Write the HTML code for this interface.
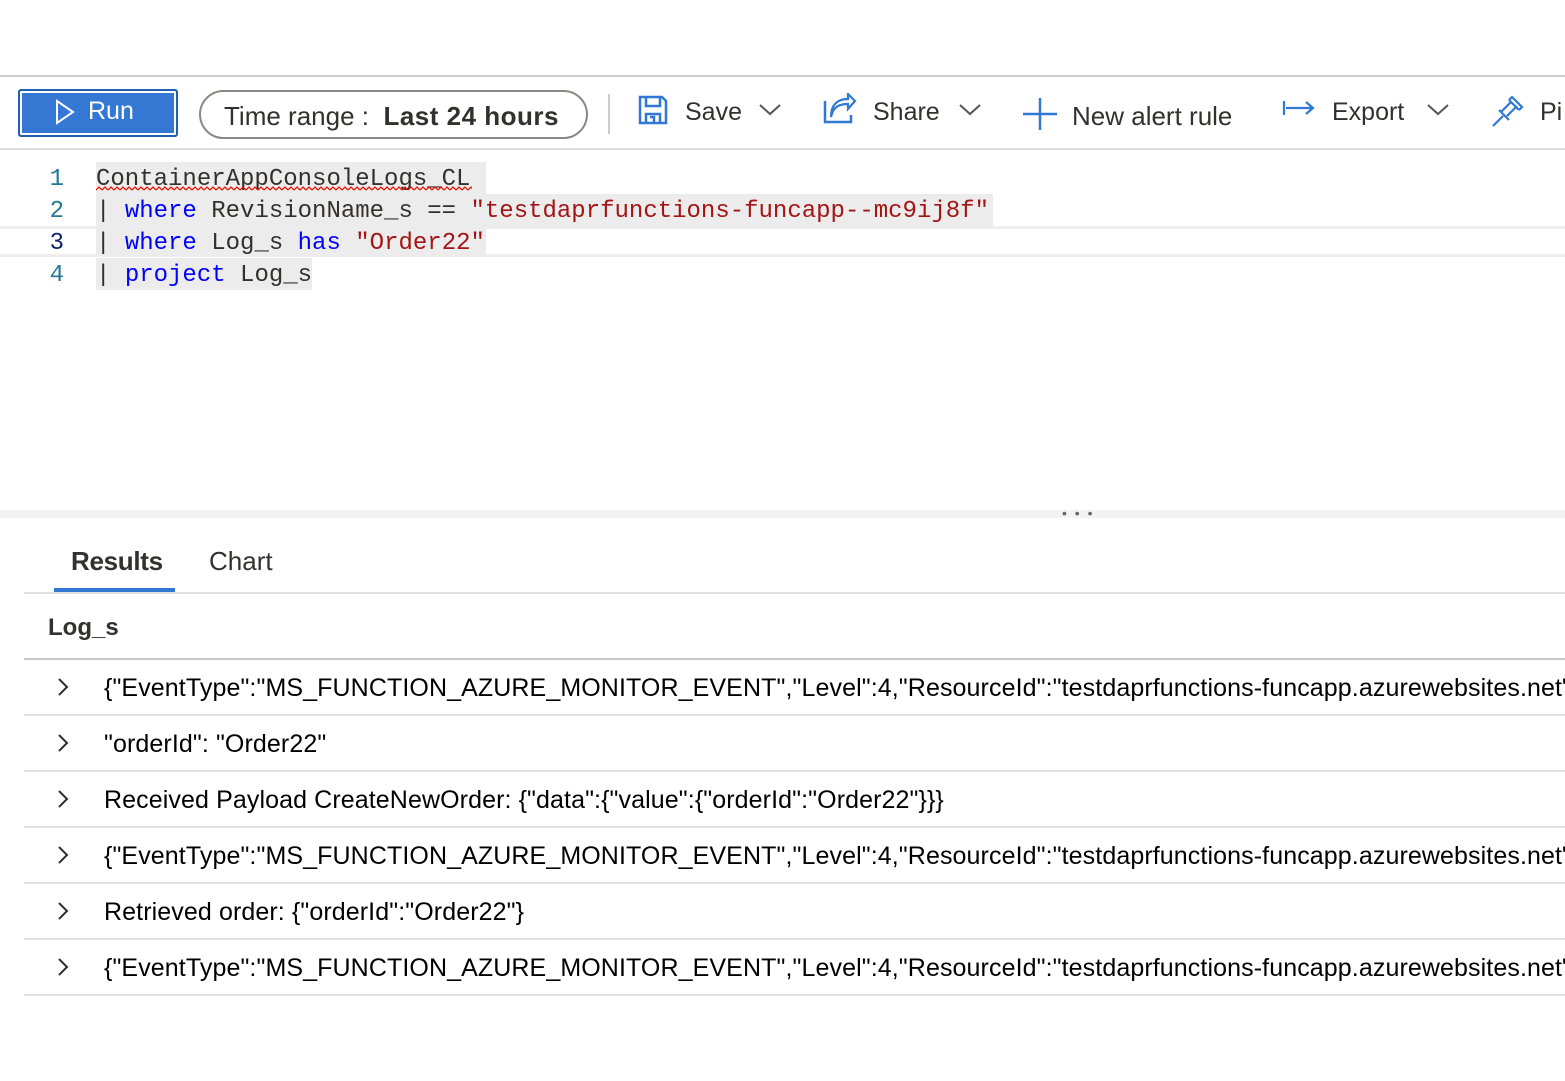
<!DOCTYPE html>
<html><head><meta charset="utf-8"><style>
*{margin:0;padding:0;box-sizing:border-box}
body{width:1565px;height:1081px;background:#fff;position:relative;overflow:hidden;font-family:"Liberation Sans",sans-serif;color:#323130}
.abs{position:absolute}
.tb{font-size:25px;color:#323130;white-space:nowrap}
.mono{font-family:"Liberation Mono",monospace;font-size:24px;white-space:pre}
.kw{color:#0000ff}.st{color:#a31515}
.ln{position:absolute;left:0;width:64px;text-align:right;font-family:"Liberation Mono",monospace;font-size:24px;color:#237893}
.row{position:absolute;left:24px;right:0;height:56px;border-bottom:2px solid #e1e1e1}
.row .chev{position:absolute;left:32px;top:16px}
.row .t{position:absolute;left:80px;top:14px;font-size:25px;color:#000;white-space:nowrap;letter-spacing:0.1px}
</style></head><body>
<div class="abs" style="left:0;top:75px;width:1565px;height:2px;background:#ccc"></div>
<div class="abs" style="left:0;top:148px;width:1565px;height:2px;background:#ddd"></div>

<div class="abs" style="left:18px;top:89px;width:160px;height:48px;background:#3478d4;border:2px solid #1f5fb4;border-radius:3px;box-shadow:inset 0 0 0 2px #fff"></div>
<svg class="abs" style="left:54px;top:99px" width="22" height="26"><path d="M3 2 L19 13 L3 24 Z" fill="none" stroke="#fff" stroke-width="2"/></svg>
<div class="abs tb" style="left:88px;top:97px;color:#fff">Run</div>

<div class="abs" style="left:199px;top:90px;width:389px;height:49px;border:2px solid #8a8886;border-radius:25px"></div>
<div class="abs tb" style="left:224px;top:101px;font-size:26px">Time range :&nbsp; <b style="font-weight:bold;letter-spacing:0.5px">Last 24 hours</b></div>
<div class="abs" style="left:608px;top:94px;width:2px;height:40px;background:#ccc"></div>

<svg class="abs" style="left:638px;top:95px" width="30" height="30"><path d="M2 2 H24 L28 6 V28 H2 Z M8 2 V11 H22 V2 M8 28 V19 H22 V28 M12 22 H16 V28" fill="none" stroke="#3178d2" stroke-width="2.5"/></svg>
<div class="abs tb" style="left:685px;top:98px">Save</div>
<svg class="abs" style="left:758px;top:103px" width="24" height="14"><path d="M2 2 L12 11 L22 2" fill="none" stroke="#555" stroke-width="2"/></svg>

<svg class="abs" style="left:823px;top:93px" width="34" height="32"><path d="M2 8 V29 H28 V22" fill="none" stroke="#3178d2" stroke-width="2.5"/><path d="M8 24 C10 14 16 11 25 11 V16 L32 8 L25 1 V6 C14 6 8 12 8 24 Z" fill="none" stroke="#3178d2" stroke-width="2.2"/></svg>
<div class="abs tb" style="left:873px;top:98px">Share</div>
<svg class="abs" style="left:958px;top:103px" width="24" height="14"><path d="M2 2 L12 11 L22 2" fill="none" stroke="#555" stroke-width="2"/></svg>

<svg class="abs" style="left:1022px;top:96px" width="36" height="36"><path d="M18 2 V34 M1 18 H35" stroke="#3178d2" stroke-width="2.5"/></svg>
<div class="abs tb" style="left:1072px;top:101px;font-size:26px">New alert rule</div>

<svg class="abs" style="left:1282px;top:99px" width="34" height="20"><path d="M2 2 V16 M4 9 H30 M24 3 L31 9 L24 15" fill="none" stroke="#3178d2" stroke-width="2.2"/></svg>
<div class="abs tb" style="left:1332px;top:98px">Export</div>
<svg class="abs" style="left:1426px;top:103px" width="24" height="14"><path d="M2 2 L12 11 L22 2" fill="none" stroke="#555" stroke-width="2"/></svg>

<svg class="abs" style="left:1491px;top:94px" width="34" height="34"><path d="M2 32 L12 22 M8 16 L18 26 M10 18 L20 8 M16 22 L26 12 M18 6 L28 16 M18 6 L21 3 L31 13 L28 16" fill="none" stroke="#3178d2" stroke-width="2.2"/></svg>
<div class="abs tb" style="left:1540px;top:98px">Pi</div>

<!-- editor -->
<div class="abs" style="left:0;top:226px;width:1565px;height:3px;background:#eee"></div>
<div class="abs" style="left:0;top:254px;width:1565px;height:3px;background:#eee"></div>
<div class="abs" style="left:96px;top:162px;width:390px;height:32px;background:#ececec"></div>
<div class="abs" style="left:96px;top:194px;width:897px;height:32px;background:#ececec"></div>
<div class="abs" style="left:96px;top:226px;width:390px;height:30px;background:#ececec"></div>
<div class="abs" style="left:96px;top:258px;width:216px;height:32px;background:#ececec"></div>
<div class="ln" style="top:166px">1</div>
<div class="ln" style="top:198px">2</div>
<div class="ln" style="top:230px;color:#0b216f">3</div>
<div class="ln" style="top:262px">4</div>
<div class="abs mono" style="left:96px;top:166px">ContainerAppConsoleLogs_CL</div>
<svg class="abs" style="left:96px;top:186px" width="376" height="6"><defs><pattern id="sq" width="6" height="6" patternUnits="userSpaceOnUse"><path d="M0 4 L3 1 L6 4" fill="none" stroke="#e51400" stroke-width="1.3"/></pattern></defs><rect width="376" height="6" fill="url(#sq)"/></svg>
<div class="abs mono" style="left:96px;top:198px">| <span class="kw">where</span> RevisionName_s == <span class="st">"testdaprfunctions-funcapp--mc9ij8f"</span></div>
<div class="abs mono" style="left:96px;top:230px">| <span class="kw">where</span> Log_s <span class="kw">has</span> <span class="st">"Order22"</span></div>
<div class="abs mono" style="left:96px;top:262px">| <span class="kw">project</span> Log_s</div>

<div class="abs" style="left:0;top:510px;width:1565px;height:8px;background:#f3f3f3"></div>
<div class="abs" style="left:1062px;top:505px;font-size:14px;color:#666;letter-spacing:2px">• • •</div>

<div class="abs" style="left:71px;top:546px;font-size:26px;color:#323130;font-weight:bold;letter-spacing:-0.3px">Results</div>
<div class="abs" style="left:209px;top:546px;font-size:26px;color:#323130">Chart</div>
<div class="abs" style="left:24px;top:592px;width:1541px;height:2px;background:#e1e1e1"></div>
<div class="abs" style="left:54px;top:588px;width:121px;height:4px;background:#3178d2"></div>
<div class="abs" style="left:48px;top:614px;font-size:24px;font-weight:bold;color:#323130">Log_s</div>
<div class="abs" style="left:24px;top:658px;width:1541px;height:2px;background:#c8c8c8"></div>

<div class="row" style="top:660px"><svg class="chev" width="14" height="22"><path d="M3 3 L11 11 L3 19" fill="none" stroke="#323130" stroke-width="2"/></svg><div class="t">{"EventType":"MS_FUNCTION_AZURE_MONITOR_EVENT","Level":4,"ResourceId":"testdaprfunctions-funcapp.azurewebsites.net",</div></div>
<div class="row" style="top:716px"><svg class="chev" width="14" height="22"><path d="M3 3 L11 11 L3 19" fill="none" stroke="#323130" stroke-width="2"/></svg><div class="t">"orderId": "Order22"</div></div>
<div class="row" style="top:772px"><svg class="chev" width="14" height="22"><path d="M3 3 L11 11 L3 19" fill="none" stroke="#323130" stroke-width="2"/></svg><div class="t">Received Payload CreateNewOrder: {"data":{"value":{"orderId":"Order22"}}}</div></div>
<div class="row" style="top:828px"><svg class="chev" width="14" height="22"><path d="M3 3 L11 11 L3 19" fill="none" stroke="#323130" stroke-width="2"/></svg><div class="t">{"EventType":"MS_FUNCTION_AZURE_MONITOR_EVENT","Level":4,"ResourceId":"testdaprfunctions-funcapp.azurewebsites.net",</div></div>
<div class="row" style="top:884px"><svg class="chev" width="14" height="22"><path d="M3 3 L11 11 L3 19" fill="none" stroke="#323130" stroke-width="2"/></svg><div class="t">Retrieved order: {"orderId":"Order22"}</div></div>
<div class="row" style="top:940px"><svg class="chev" width="14" height="22"><path d="M3 3 L11 11 L3 19" fill="none" stroke="#323130" stroke-width="2"/></svg><div class="t">{"EventType":"MS_FUNCTION_AZURE_MONITOR_EVENT","Level":4,"ResourceId":"testdaprfunctions-funcapp.azurewebsites.net",</div></div>
</body></html>
